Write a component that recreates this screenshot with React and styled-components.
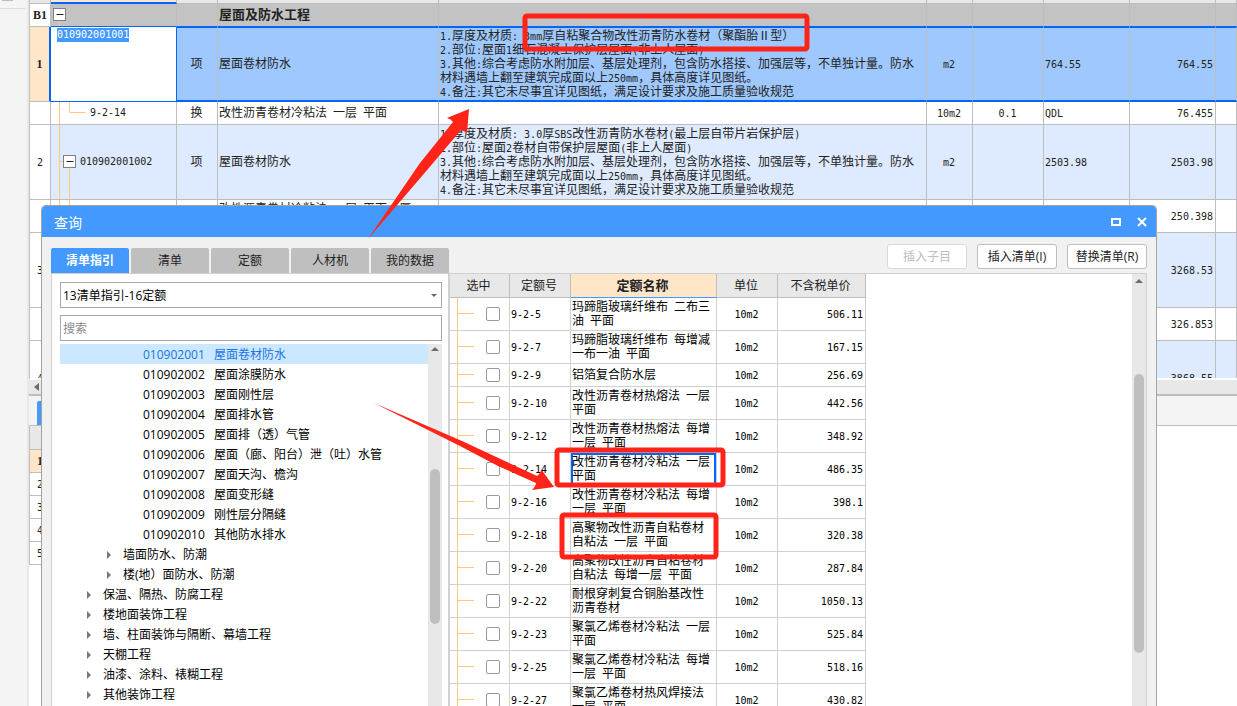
import React, { Fragment } from 'react';
import styled, { createGlobalStyle, css } from 'styled-components';

const GRID_FONT = '"DejaVu Sans Mono", "Noto Sans CJK SC", monospace';
const UI_FONT = '"Open Sans", "Noto Sans CJK SC", sans-serif';

const GlobalStyle = createGlobalStyle`
    *, *::before, *::after { box-sizing: border-box; }
    body {
        margin: 0;
        overflow: hidden;
        background: #fff;
        color: #222;
        font: 12px/14px ${UI_FONT};
    }
    table { border-spacing: 0; table-layout: fixed; }
    th, td { padding: 0; }
    button, input, select { font-family: inherit; }
`;

const Page = styled.div`
    position: relative;
    display: flex;
    height: 100vh;
    overflow: hidden;
`;

const Sidebar = styled.aside`
    flex: none;
    width: 29px;
    background: #f4f4f4;
    border-right: 2px solid #e8e8e8;
    &::before {
        content: '';
        display: block;
        width: 11px;
        height: 1px;
        margin-left: 2px;
        background: #bdbdbd;
    }
    &::after {
        content: '';
        display: block;
        width: 25px;
        margin-top: 7px;
        border-top: 1px solid #dcdcdc;
    }
`;

const Workspace = styled.main`
    flex: 1;
    min-width: 0;
    display: flex;
    flex-direction: column;
`;

const BillPane = styled.div`
    flex: 0 0 380px;
    overflow: hidden;
    border-left: 1px solid #c0c0c0;
    border-bottom: 2px solid #fff;
`;

const BillTable = styled.table`
    width: 100%;
    font-family: ${GRID_FONT};
`;

const Cell = styled.td`
    border-right: 1px solid #bdbdbd;
    border-bottom: 1px solid #bdbdbd;
    overflow: hidden;
    padding: 0 2px 0 1px;
    text-align: ${props => props.$align || 'left'};
    vertical-align: middle;
`;

const IndexCell = styled(Cell)`
    padding: 0;
    text-align: center;
    background: #fff;
`;

const CodeCell = styled(Cell)`
    padding: 0;
`;

const ROW_LOOK = {
    head: css`
        height: 4px;
        ${Cell} { background: #e8e8e8; }
        ${CodeCell} {
            background: #ffe6c8;
            border-bottom: 2px solid #0066ff;
        }
    `,
    section: css`
        height: 23px;
        font-size: 13px;
        font-weight: bold;
        ${Cell} { background: #c3c3c3; border-bottom-color: #0066ff; }
        ${IndexCell} { background: #fff; border-bottom-color: #bdbdbd; }
    `,
    current: css`
        height: 75px;
        ${Cell} {
            background: #9fc8ff;
            border-top: 1px solid #0066ff;
            border-bottom: 2px solid #0066ff;
        }
        ${IndexCell} {
            background: #ffe6c8;
            border-top: 0;
            border-right: 2px solid #0066ff;
            border-bottom: 1px solid #bdbdbd;
            font-weight: bold;
        }
        ${CodeCell} {
            background: #fff;
            border-top: 0;
            border-right: 1px solid #0066ff;
            border-bottom: 1px solid #0066ff;
            vertical-align: top;
        }
    `,
    bill: css`
        height: 75px;
        ${Cell} { background: #deeaff; }
        ${IndexCell} { background: #fff; }
    `,
    sub: css`
        height: ${props => props.$tall ? 33 : 23}px;
    `
};

const BillRow = styled.tr`
    ${props => ROW_LOOK[props.$kind]}
`;

const CodeBox = styled.div`
    display: flex;
    align-items: center;
    svg { flex: none; display: block; }
`;

const CodeInput = styled.input`
    display: block;
    width: 72px;
    height: 14px;
    margin: 1px 0 0 6px;
    padding: 0;
    border: 0;
    outline: 0;
    background: #4499ff;
    color: #fff;
    font: 10px/14px ${GRID_FONT};
`;

const Line = styled.div`
    height: 14px;
    white-space: nowrap;
`;

const Paragraph = styled.div`
    white-space: pre-wrap;
`;

// half-width letters keep to half of a Chinese character
const Half = styled.span`
    font-size: 10px;
    line-height: 10px;
    ${props => props.$bold && css`
        font-family: "Liberation Serif", serif;
        font-size: 12px;
    `}
`;

const ScrollStrip = styled.div`
    flex: none;
    height: 16px;
    padding-left: 5px;
    background: #e8e8e8;
    border-bottom: 2px solid #bdbdbd;
    display: flex;
    align-items: center;
`;

const DetailBar = styled.div`
    flex: none;
    height: 30px;
    padding: 5px 0 0 8px;
    background: #f4f4f4;
    border-bottom: 1px solid #bdbdbd;
`;

const DetailTab = styled.div`
    width: 78px;
    height: 24px;
    background: #4499ff;
    border-radius: 2px 2px 0 0;
`;

const DetailTable = styled.table`
    width: 600px;
    border-left: 1px solid #bdbdbd;
    font-family: ${GRID_FONT};
`;

const DetailRow = styled.tr`
    height: 23px;
    ${props => props.$head && css`
        height: 24px;
        ${Cell} { background: #e8e8e8; }
    `}
    ${props => props.$current && css`
        font-weight: bold;
        ${IndexCell} { background: #ffe6c8; }
    `}
`;

const Dialog = styled.section`
    position: absolute;
    top: 205px;
    left: 41px;
    right: 80px;
    bottom: 0;
    display: flex;
    flex-direction: column;
    overflow: hidden;
    background: #f1f1f1;
    border: 1px solid #a3a3a3;
    border-bottom: 0;
    border-radius: 5px 5px 0 0;
`;

const TitleBar = styled.header`
    flex: none;
    display: flex;
    align-items: center;
    justify-content: space-between;
    height: 31px;
    padding: 2px 8px 0 12px;
    background: #4499ff;
    color: #fff;
`;

const Title = styled.h1`
    margin: 0;
    font-size: 14px;
    line-height: 20px;
    font-weight: normal;
`;

const WindowButtons = styled.div`
    display: flex;
    gap: 14px;
`;

const WindowButton = styled.button`
    display: block;
    width: 12px;
    height: 14px;
    padding: 0;
    border: 0;
    background: none;
    svg { display: block; }
`;

const Toolbar = styled.div`
    flex: none;
    display: flex;
    justify-content: space-between;
    align-items: flex-end;
    height: 36px;
    padding: 0 9px;
`;

const Tabs = styled.nav`
    display: flex;
    gap: 2px;
`;

const Tab = styled.button`
    width: 78px;
    height: 25px;
    padding: 0;
    border: 0;
    border-radius: 2px 2px 0 0;
    background: ${props => props.$active ? '#4499ff' : '#bfbfbf'};
    color: ${props => props.$active ? '#fff' : '#222'};
    font-size: 12px;
    line-height: 20px;
    font-weight: ${props => props.$active ? 'bold' : 'normal'};
`;

const Actions = styled.div`
    display: flex;
    gap: 10px;
    padding-bottom: 4px;
`;

const Action = styled.button`
    width: 80px;
    height: 25px;
    padding: 0;
    border: 1px solid #bdbdbd;
    border-radius: 3px;
    background: #fff;
    color: #222;
    font-size: 12px;
    line-height: 20px;
    white-space: nowrap;
    &:disabled {
        border-color: #d9d9d9;
        color: #bdbdbd;
    }
`;

const Content = styled.div`
    flex: 1;
    min-height: 0;
    display: flex;
    padding: 0 9px;
`;

const GuidePane = styled.div`
    flex: none;
    width: 398px;
    display: flex;
    flex-direction: column;
    padding: 8px 6px 0 8px;
    background: #fff;
    border: 1px solid #d0d0d0;
    border-bottom: 0;
`;

const fieldBox = css`
    width: 382px;
    height: 26px;
    border: 1px solid #a8a8a8;
    border-radius: 0;
    background: #fff;
    font-size: 12px;
    outline: 0;
`;

const SelectWrap = styled.div`
    position: relative;
    margin-bottom: 7px;
    svg {
        position: absolute;
        top: 11px;
        right: 4px;
        pointer-events: none;
    }
`;

const Library = styled.select`
    ${fieldBox}
    display: block;
    appearance: none;
    padding: 0 2px;
    color: #000;
`;

const Search = styled.input`
    ${fieldBox}
    padding: 0 2px;
    &::placeholder { color: #8a8a8a; opacity: 1; }
`;

const TreeBox = styled.div`
    flex: 1;
    min-height: 0;
    display: flex;
    width: 382px;
    margin-top: 3px;
`;

const Tree = styled.ul`
    flex: 1;
    margin: 0;
    padding: 0;
    overflow: hidden;
    list-style: none;
`;

const TreeItem = styled.li`
    display: flex;
    align-items: center;
    height: 20px;
    padding-top: 2px;
    padding-left: ${props => props.$level * 20 + 3}px;
    background: ${props => props.$active ? '#cce8ff' : 'none'};
    color: ${props => props.$active ? '#1a73e8' : '#000'};
    line-height: 18px;
    white-space: nowrap;
`;

const Twisty = styled.span`
    width: 20px;
    svg { display: block; margin-left: 3px; }
`;

const TreeCode = styled.span`
    width: 71px;
`;

const Scrollbar = styled.div`
    flex: none;
    width: ${props => props.$framed ? 15 : 14}px;
    padding: ${props => props.$framed ? 4 : 2}px 0 0 2px;
    background: #e8e8e8;
    border-right: ${props => props.$framed ? '1px solid #d0d0d0' : '0'};
    svg { display: block; }
`;

const Thumb = styled.div`
    width: 10px;
    height: ${props => props.$size}px;
    margin-top: ${props => props.$from}px;
    border-radius: 5px;
    background: #bfbfbf;
`;

const QuotaPane = styled.div`
    flex: 1;
    min-width: 0;
    display: flex;
    justify-content: space-between;
    background: #fff;
    border-top: 1px solid #d0d0d0;
    overflow: hidden;
`;

const QuotaTable = styled.table`
    width: 417px;
    height: 0;
    border-left: 1px solid #d0d0d0;
    font-family: ${GRID_FONT};
    color: #000;
`;

const QuotaHead = styled.th`
    height: 24px;
    padding: 0 2px 0 0;
    border-right: 1px solid #bdbdbd;
    border-bottom: 1px solid ${props => props.$current ? '#4499ff' : '#bdbdbd'};
    background: ${props => props.$current ? '#ffe6c8' : '#e8e8e8'};
    color: #222;
    font-size: ${props => props.$current ? 13 : 12}px;
    font-weight: ${props => props.$current ? 'bold' : 'normal'};
`;

const QuotaCell = styled(Cell)`
    border-color: #d0d0d0;
    padding: 0 2px 0 1px;
    ${props => props.$current && css`
        box-shadow: inset 2px 2px #0066ff, inset -2px -2px #0066ff;
    `}
`;

const QuotaRow = styled.tr`
    height: ${props => props.$short ? 23 : 33}px;
`;

const PickCell = styled(QuotaCell)`
    padding: 0;
`;

const Pick = styled.label`
    display: flex;
    align-items: center;
    padding-left: 7px;
    height: ${props => props.$short ? 22 : 32}px;
    &::before {
        content: '';
        align-self: stretch;
        border-left: 1px solid #ffc978;
    }
    &::after {
        content: '';
        order: 1;
        width: 16px;
        height: 2px;
        border-top: 1px solid #ffc978;
    }
    input {
        order: 2;
        appearance: none;
        width: 14px;
        height: 14px;
        margin: 0 0 0 12px;
        border: 1px solid #999;
        border-radius: 2px;
        background: #fff;
    }
`;

const Marks = styled.svg`
    position: absolute;
    top: 0;
    left: 0;
    pointer-events: none;
`;

const Mixed = ({ text, bold }) =>
    text.split(/([\x20-\x7e]+)/).map((part, i) =>
        i % 2 ? <Half key={i} $bold={bold}>{part}</Half> : <Fragment key={i}>{part}</Fragment>
    );

const Folder = ({ x, y }) => (
    <Fragment>
        <rect x={x} y={y} width="12" height="12" fill="#fff" stroke="#808080" />
        <path d={`M${x + 3} ${y + 6}h7`} stroke="#222" />
    </Fragment>
);

const GUIDES = {
    root: (
        <svg width="29" height="22" fill="none" stroke="#ffc978">
            <path d="M8.5 17v5" />
            <Folder x={2.5} y={4.5} />
        </svg>
    ),
    leaf: (
        <svg width="39" height="22" fill="none" stroke="#ffc978">
            <path d="M8.5 0v22M18.5 0v10.5h16" />
        </svg>
    ),
    branch: (
        <svg width="29" height="74" fill="none" stroke="#ffc978">
            <path d="M8.5 0v74M8.5 36.5h4M18.5 43v31" />
            <Folder x={12.5} y={30.5} />
        </svg>
    ),
    tall: (
        <svg width="39" height="32" fill="none" stroke="#ffc978">
            <path d="M8.5 0v32M18.5 0v15.5h16" />
        </svg>
    )
};

const COLUMNS = [21, 126, 41, 221, null, 46, 71, 86, 86, 21];

const COMMON = [
    '3.其他:综合考虑防水附加层、基层处理剂，包含防水搭接、加强层等，不单独计量。防水',
    '材料遇墙上翻至建筑完成面以上250mm，具体高度详见图纸。',
    '4.备注:其它未尽事宜详见图纸，满足设计要求及施工质量验收规范'
];

const BILLS = [
    { kind: 'section', index: 'B1', guide: 'root', name: '屋面及防水工程' },
    {
        kind: 'current', index: '1', code: '010902001001', type: '项', name: '屋面卷材防水',
        lines: ['1.厚度及材质: 3mm厚自粘聚合物改性沥青防水卷材（聚酯胎Ⅱ型）', '2.部位:屋面1细石混凝土保护层屋面(非上人屋面)', ...COMMON],
        unit: 'm2', formula: '764.55', amount: '764.55'
    },
    { kind: 'sub', guide: 'leaf', code: '9-2-14', type: '换', name: '改性沥青卷材冷粘法 一层 平面', unit: '10m2', rate: '0.1', formula: 'QDL', amount: '76.455' },
    {
        kind: 'bill', index: '2', guide: 'branch', code: '010902001002', type: '项', name: '屋面卷材防水',
        lines: ['1.厚度及材质: 3.0厚SBS改性沥青防水卷材(最上层自带片岩保护层)', '2.部位:屋面2卷材自带保护层屋面(非上人屋面)', ...COMMON],
        unit: 'm2', formula: '2503.98', amount: '2503.98'
    },
    { kind: 'sub', tall: true, guide: 'tall', name: '改性沥青卷材冷粘法 一层 平面 3厚SBS改性沥青防水卷材', amount: '250.398' },
    { kind: 'bill', index: '3', guide: 'branch', amount: '3268.53' },
    { kind: 'sub', tall: true, guide: 'tall', amount: '326.853' },
    { kind: 'bill', index: '4', guide: 'branch', amount: '3868.55' }
];

const TREE = [
    [4, '屋面卷材防水', '010902001'],
    [4, '屋面涂膜防水', '010902002'],
    [4, '屋面刚性层', '010902003'],
    [4, '屋面排水管', '010902004'],
    [4, '屋面排（透）气管', '010902005'],
    [4, '屋面（廊、阳台）泄（吐）水管', '010902006'],
    [4, '屋面天沟、檐沟', '010902007'],
    [4, '屋面变形缝', '010902008'],
    [4, '刚性层分隔缝', '010902009'],
    [4, '其他防水排水', '010902010'],
    [2, '墙面防水、防潮'],
    [2, '楼(地）面防水、防潮'],
    [1, '保温、隔热、防腐工程'],
    [1, '楼地面装饰工程'],
    [1, '墙、柱面装饰与隔断、幕墙工程'],
    [1, '天棚工程'],
    [1, '油漆、涂料、裱糊工程'],
    [1, '其他装饰工程']
];

const QUOTAS = [
    ['9-2-5', '玛蹄脂玻璃纤维布 二布三油 平面', '506.11'],
    ['9-2-7', '玛蹄脂玻璃纤维布 每增减一布一油 平面', '167.15'],
    ['9-2-9', '铝箔复合防水层', '256.69'],
    ['9-2-10', '改性沥青卷材热熔法 一层 平面', '442.56'],
    ['9-2-12', '改性沥青卷材热熔法 每增一层 平面', '348.92'],
    ['9-2-14', '改性沥青卷材冷粘法 一层 平面', '486.35'],
    ['9-2-16', '改性沥青卷材冷粘法 每增一层 平面', '398.1'],
    ['9-2-18', '高聚物改性沥青自粘卷材自粘法 一层 平面', '320.38'],
    ['9-2-20', '高聚物改性沥青自粘卷材自粘法 每增一层 平面', '287.84'],
    ['9-2-22', '耐根穿刺复合铜胎基改性沥青卷材', '1050.13'],
    ['9-2-23', '聚氯乙烯卷材冷粘法 一层 平面', '525.84'],
    ['9-2-25', '聚氯乙烯卷材冷粘法 每增一层 平面', '518.16'],
    ['9-2-27', '聚氯乙烯卷材热风焊接法 一层 平面', '430.82']
];

const UpArrow = () => (
    <svg width="10" height="6"><path d="M1 5l4-4 4 4z" fill="#6b6b78" /></svg>
);

const Bills = () => (
    <BillTable>
        <colgroup>
            {COLUMNS.map((width, i) => <col key={i} style={width ? { width } : undefined} />)}
        </colgroup>
        <tbody>
            <BillRow $kind="head">
                <IndexCell /><CodeCell /><Cell /><Cell /><Cell /><Cell /><Cell /><Cell /><Cell /><Cell />
            </BillRow>
            {BILLS.map((row, i) => (
                <BillRow key={i} $kind={row.kind} $tall={row.tall}>
                    <IndexCell><Mixed text={row.index || ''} bold={row.kind !== 'bill'} /></IndexCell>
                    <CodeCell>
                        {row.kind === 'current'
                            ? <CodeInput defaultValue={row.code} aria-label="编码" />
                            : <CodeBox>{GUIDES[row.guide]}<Mixed text={row.code || ''} /></CodeBox>}
                    </CodeCell>
                    <Cell $align="center">{row.type}</Cell>
                    <Cell><Paragraph><Mixed text={row.name || ''} /></Paragraph></Cell>
                    <Cell>
                        {(row.lines || []).map(line => <Line key={line}><Mixed text={line} /></Line>)}
                    </Cell>
                    <Cell $align="center"><Mixed text={row.unit || ''} /></Cell>
                    <Cell $align="center"><Mixed text={row.rate || ''} /></Cell>
                    <Cell><Mixed text={row.formula || ''} /></Cell>
                    <Cell $align="right"><Mixed text={row.amount || ''} /></Cell>
                    <Cell />
                </BillRow>
            ))}
        </tbody>
    </BillTable>
);

const Details = () => (
    <DetailTable>
        <colgroup><col style={{ width: 21 }} /><col /></colgroup>
        <tbody>
            <DetailRow $head><Cell /><Cell /></DetailRow>
            {['1', '2', '3', '4', '5'].map(n => (
                <DetailRow key={n} $current={n === '1'}>
                    <IndexCell><Mixed text={n} bold={n === '1'} /></IndexCell><Cell />
                </DetailRow>
            ))}
        </tbody>
    </DetailTable>
);

const Guide = () => (
    <GuidePane>
        <SelectWrap>
            <Library aria-label="清单指引库">
                <option>13清单指引-16定额</option>
            </Library>
            <svg width="8" height="5"><path d="M1 1h6l-3 3z" fill="#666" /></svg>
        </SelectWrap>
        <Search placeholder="搜索" aria-label="搜索" />
        <TreeBox>
            <Tree>
                {TREE.map(([level, name, code], i) => (
                    <TreeItem key={name} $level={level} $active={i === 0}>
                        {code
                            ? <TreeCode>{code}</TreeCode>
                            : <Twisty><svg width="6" height="8"><path d="M1 0l4 4-4 4z" fill="#777" /></svg></Twisty>}
                        {name}
                    </TreeItem>
                ))}
            </Tree>
            <Scrollbar>
                <UpArrow />
                <Thumb $from={117} $size={155} />
            </Scrollbar>
        </TreeBox>
    </GuidePane>
);

const Quotas = () => (
    <QuotaPane>
        <QuotaTable>
            <colgroup>
                {[60, 61, 146, 61, 88].map((width, i) => <col key={i} style={{ width }} />)}
            </colgroup>
            <thead>
                <tr>
                    <QuotaHead>选中</QuotaHead>
                    <QuotaHead>定额号</QuotaHead>
                    <QuotaHead $current>定额名称</QuotaHead>
                    <QuotaHead>单位</QuotaHead>
                    <QuotaHead>不含税单价</QuotaHead>
                </tr>
            </thead>
            <tbody>
                {QUOTAS.map(([code, name, price]) => (
                    <QuotaRow key={code} $short={code === '9-2-9'}>
                        <PickCell>
                            <Pick $short={code === '9-2-9'}><input type="checkbox" aria-label={code} /></Pick>
                        </PickCell>
                        <QuotaCell><Mixed text={code} /></QuotaCell>
                        <QuotaCell $current={code === '9-2-14'}><Paragraph><Mixed text={name} /></Paragraph></QuotaCell>
                        <QuotaCell $align="center"><Mixed text="10m2" /></QuotaCell>
                        <QuotaCell $align="right"><Mixed text={price} /></QuotaCell>
                    </QuotaRow>
                ))}
            </tbody>
        </QuotaTable>
        <Scrollbar $framed>
            <UpArrow />
            <Thumb $from={90} $size={279} />
        </Scrollbar>
    </QuotaPane>
);

export default class App extends React.Component {
    render() {
        return (
            <Page>
                <GlobalStyle />
                <Sidebar />
                <Workspace>
                    <BillPane><Bills /></BillPane>
                    <ScrollStrip>
                        <svg width="5" height="8"><path d="M5 0v8L0 4z" fill="#6b6b78" /></svg>
                    </ScrollStrip>
                    <DetailBar><DetailTab /></DetailBar>
                    <Details />
                </Workspace>
                <Dialog>
                    <TitleBar>
                        <Title>查询</Title>
                        <WindowButtons>
                            <WindowButton aria-label="最大化">
                                <svg width="12" height="12"><path d="M2 2h8v6H2z" fill="none" stroke="#fff" strokeWidth="2" /></svg>
                            </WindowButton>
                            <WindowButton aria-label="关闭">
                                <svg width="12" height="12"><path d="M2 1l8 8M10 1l-8 8" stroke="#fff" strokeWidth="2" /></svg>
                            </WindowButton>
                        </WindowButtons>
                    </TitleBar>
                    <Toolbar>
                        <Tabs>
                            {['清单指引', '清单', '定额', '人材机', '我的数据'].map((name, i) => (
                                <Tab key={name} $active={i === 0}>{name}</Tab>
                            ))}
                        </Tabs>
                        <Actions>
                            <Action disabled>插入子目</Action>
                            <Action>插入清单(I)</Action>
                            <Action>替换清单(R)</Action>
                        </Actions>
                    </Toolbar>
                    <Content>
                        <Guide />
                        <Quotas />
                    </Content>
                </Dialog>
                <Marks width="1237" height="706" fill="none" stroke="#ff2318" strokeWidth="5">
                    <rect x="525" y="16" width="282" height="33" rx="2" />
                    <rect x="557" y="450" width="166" height="35" rx="2" />
                    <rect x="562" y="515" width="154" height="42" rx="2" />
                    <path d="M368 239L420 163L453 122Q451 119 447 118L469 109L467 133Q464 131 461 130L428 169Z" fill="#ff2318" stroke="none" />
                    <path d="M374 403L462 441L507 462L537 476Q541 473 541 469L554 487L532 490Q536 486 536 483L498 466L460 446Z" fill="#ff2318" stroke="none" />
                </Marks>
            </Page>
        );
    }
}
